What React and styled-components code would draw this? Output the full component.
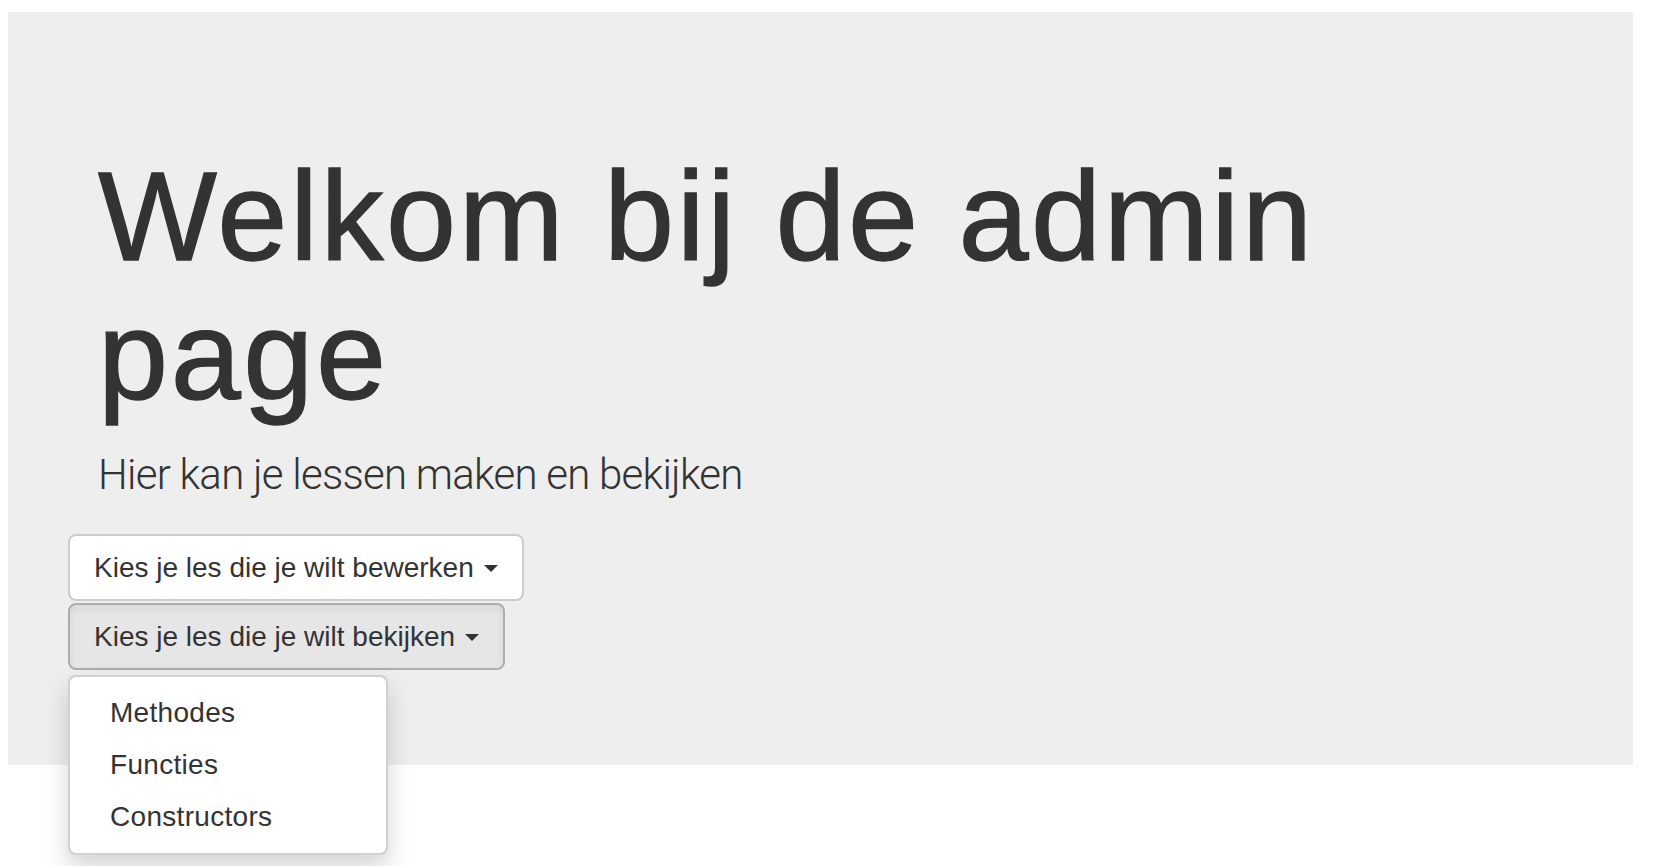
import styled, { createGlobalStyle } from "styled-components";

const GlobalStyle = createGlobalStyle`
  html, body {
    margin: 0;
    padding: 0;
    background: #fff;
  }
  body {
    font-family: "Liberation Sans", Arial, sans-serif;
    color: #333;
  }
`;

const lessons = ["Methodes", "Functies", "Constructors"];

function DropdownButton({ label, open, items = [] }) {
  return (
    <Dropdown>
      <Toggle $open={open}>
        {label}
        <Caret />
      </Toggle>
      {open && (
        <Menu>
          {items.map((item) => (
            <MenuItem key={item}>{item}</MenuItem>
          ))}
        </Menu>
      )}
    </Dropdown>
  );
}

export default function App() {
  return (
    <>
      <GlobalStyle />
      <Page>
        <Jumbotron>
          <Intro>
            <Title>Welkom bij de admin page</Title>
            <Lead>Hier kan je lessen maken en bekijken</Lead>
          </Intro>
          <Actions>
            <DropdownButton label="Kies je les die je wilt bewerken" />
            <DropdownButton
              label="Kies je les die je wilt bekijken"
              open
              items={lessons}
            />
          </Actions>
        </Jumbotron>
      </Page>
    </>
  );
}

/* ─── Styled Components ─── */

const Page = styled.div`
  min-height: 100vh;
  box-sizing: border-box;
  padding: 12px 23px 0 8px;
`;

const Jumbotron = styled.div`
  background: #eee;
  padding: 96px 0 95px 60px;
`;

const Intro = styled.div`
  padding-left: 30px;
`;

/* Helvetica Neue medium: Liberation Sans widened and thickened a bit */
const Title = styled.h1`
  margin: 40px 0 20px;
  max-width: 1300px;
  font-size: 126px;
  font-weight: 400;
  line-height: 1.1;
  letter-spacing: 2.6px;
  -webkit-text-stroke: 1.3px #333;
  color: #333;
`;

const Lead = styled.p`
  margin: 0 0 29px;
  font-family: "Roboto", "Liberation Sans", sans-serif;
  font-size: 42px;
  font-weight: 300;
  line-height: 60px;
  letter-spacing: -0.75px;
  color: #333;
`;

const Actions = styled.div`
  display: flex;
  flex-direction: column;
  align-items: flex-start;
  gap: 2px;
`;

const Dropdown = styled.div`
  position: relative;
`;

const Toggle = styled.button`
  display: inline-flex;
  align-items: center;
  gap: 10px;
  height: 67px;
  padding: 0 24px;
  border: 2px solid ${(p) => (p.$open ? "#adadad" : "#ccc")};
  border-radius: 8px;
  background: ${(p) => (p.$open ? "#e6e6e6" : "#fff")};
  box-shadow: ${(p) => (p.$open ? "inset 0 4px 8px rgba(0,0,0,0.06)" : "none")};
  font-family: "Liberation Sans", Arial, sans-serif;
  font-size: 28px;
  color: #333;
  cursor: pointer;
`;

const Caret = styled.span`
  width: 0;
  height: 0;
  border-top: 7px solid #333;
  border-left: 7px solid transparent;
  border-right: 7px solid transparent;
  margin-top: 2px;
`;

const Menu = styled.ul`
  position: absolute;
  top: 100%;
  left: 0;
  margin: 5px 0 0;
  padding: 10px 0;
  min-width: 320px;
  box-sizing: border-box;
  list-style: none;
  background: #fff;
  border: 2px solid rgba(0, 0, 0, 0.18);
  border-radius: 8px;
  box-shadow: 0 12px 24px rgba(0, 0, 0, 0.175);
  z-index: 10;
`;

const MenuItem = styled.li`
  padding: 6px 40px;
  font-size: 28px;
  line-height: 40px;
  letter-spacing: 0.3px;
  color: #333;
  white-space: nowrap;
  cursor: pointer;
`;
